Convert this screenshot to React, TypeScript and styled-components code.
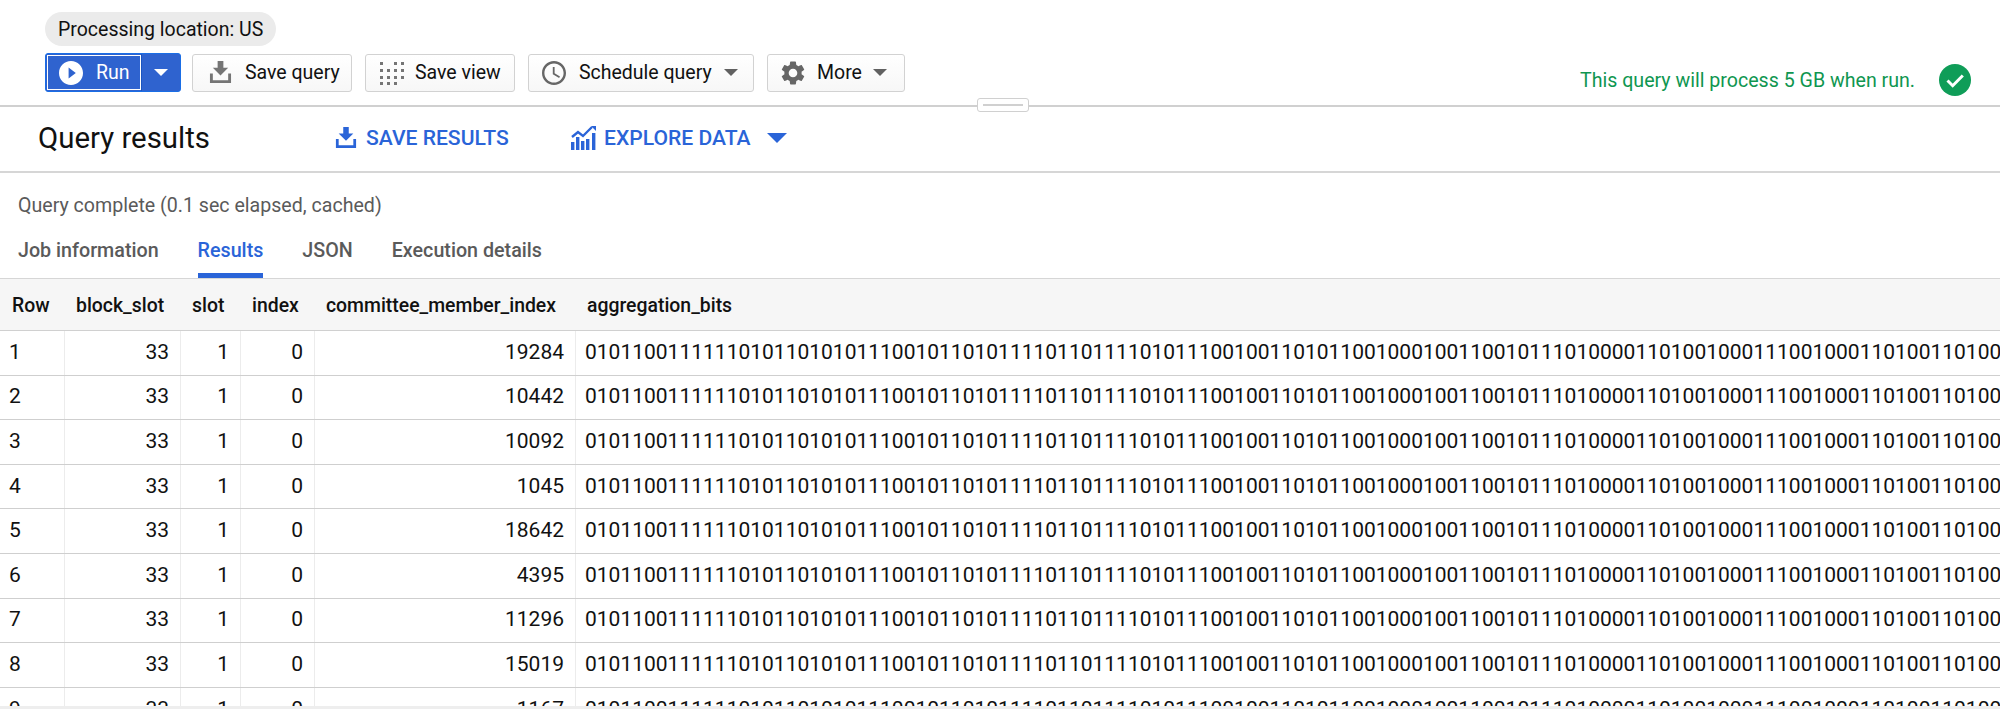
import React from "react";
import styled, { createGlobalStyle } from "styled-components";

const Global = createGlobalStyle`
  html, body { margin: 0; padding: 0; background: #fff; overflow: hidden; }
  body { font-family: Roboto, "Liberation Sans", sans-serif; color: #111; }
`;

const Page = styled.div`
  width: 2000px;
  height: 709px;
  overflow: hidden;
  display: flex;
  flex-direction: column;
  position: relative;
`;

const TopSection = styled.header`
  padding: 12px 0 0 45px;
  box-sizing: border-box;
  border-bottom: 2px solid #d0d0d0;
  height: 107px;
  position: relative;
`;

const Chip = styled.div`
  display: inline-flex;
  align-items: center;
  height: 34px;
  padding: 0 13px;
  border-radius: 17px;
  background: #ebebeb;
  font-size: 19.5px;
`;

const Toolbar = styled.div`
  display: flex;
  align-items: center;
  height: 39px;
  margin-top: 7px;
`;

const RunGroup = styled.div`
  display: flex;
  width: 136px;
  height: 39px;
  box-sizing: border-box;
  border: 1px solid #1a6ee6;
  border-radius: 3px;
  background: #2f63cf;
  margin-right: 11px;
`;

const RunMain = styled.div`
  width: 94px;
  margin: 1px 0 1px 1px;
  box-sizing: border-box;
  border: 1.5px solid #fff;
  display: flex;
  align-items: center;
  gap: 13px;
  padding-left: 11px;
  color: #fff;
  font-size: 19.5px;
`;

const RunCaret = styled.div`
  flex: 1;
  display: flex;
  align-items: center;
  justify-content: center;
  border-left: 1px solid #1a55c0;
`;

const Button = styled.div<{ $w: number; $gap: number; $pad: number }>`
  width: ${(p) => p.$w}px;
  height: 38px;
  box-sizing: border-box;
  border: 1.5px solid #d2d2d2;
  border-radius: 3px;
  background: linear-gradient(#fff, #f7f7f7);
  margin-right: 13px;
  display: flex;
  align-items: center;
  gap: ${(p) => p.$gap}px;
  padding-left: ${(p) => p.$pad}px;
  font-size: 19.5px;
  color: #111;
`;

const Caret = styled.span<{ $c: string; $s: number; $ml?: number }>`
  display: inline-block;
  width: 0;
  height: 0;
  margin-left: ${(p) => p.$ml ?? 0}px;
  border-left: ${(p) => p.$s}px solid transparent;
  border-right: ${(p) => p.$s}px solid transparent;
  border-top: ${(p) => p.$s}px solid ${(p) => p.$c};
`;

const Status = styled.div`
  position: absolute;
  right: 29px;
  top: 64px;
  display: flex;
  align-items: center;
  gap: 24px;
  color: #0f9650;
  font-size: 19.6px;
`;

const Handle = styled.div`
  position: absolute;
  left: 977px;
  bottom: -7px;
  width: 52px;
  height: 14px;
  box-sizing: border-box;
  background: #fff;
  border: 1.5px solid #d0d0d0;
  border-radius: 3px;
  display: flex;
  align-items: center;
  justify-content: center;
  &::after {
    content: "";
    width: 40px;
    height: 1.5px;
    background: #d0d0d0;
  }
`;

const ResultsBar = styled.div`
  height: 66px;
  box-sizing: border-box;
  padding-bottom: 3px;
  border-bottom: 2px solid #d6d6d6;
  display: flex;
  align-items: center;
  padding-left: 38px;
`;

const Title = styled.h1`
  margin: 0;
  font-weight: 400;
  font-size: 29.4px;
  color: #111;
  width: 297px;
`;

const Action = styled.div<{ $w: number; $gap: number }>`
  width: ${(p) => p.$w}px;
  display: flex;
  align-items: center;
  gap: ${(p) => p.$gap}px;
  color: #2a64d8;
  font-size: 21.1px;
  font-weight: 500;
`;

const CompleteLine = styled.div`
  margin-top: 21px;
  padding-left: 18px;
  font-size: 19.6px;
  line-height: 24px;
  color: #5a5a5a;
`;

const Tabs = styled.nav`
  display: flex;
  margin-top: 13px;
  padding-left: 18px;
  gap: 39px;
  height: 47px;
  box-sizing: border-box;
`;

const Tab = styled.div<{ $active?: boolean }>`
  font-size: 19.7px;
  font-weight: 500;
  line-height: 24px;
  padding-top: 8px;
  box-sizing: border-box;
  color: ${(p) => (p.$active ? "#2a64d8" : "#5a5a5a")};
  border-bottom: ${(p) => (p.$active ? "5px solid #2a64d8" : "none")};
`;

const COLS = "64px 116px 60px 74px 261px 1fr";

const HeaderRow = styled.div`
  display: grid;
  grid-template-columns: ${COLS};
  height: 53px;
  box-sizing: border-box;
  background: #f6f6f6;
  border-top: 1.5px solid #d6d6d6;
  border-bottom: 1.5px solid #d0d0d0;
`;

const HeaderCell = styled.div`
  padding: 2px 0 0 12px;
  display: flex;
  align-items: center;
  font-size: 19.4px;
  font-weight: 500;
  color: #111;
  white-space: nowrap;
  overflow: hidden;
`;

const Row = styled.div`
  display: grid;
  grid-template-columns: ${COLS};
  height: 44.6px;
  flex: none;
  box-sizing: border-box;
  border-bottom: 1.5px solid #cfcfcf;
`;

const Cell = styled.div<{ $num?: boolean }>`
  display: flex;
  align-items: center;
  justify-content: ${(p) => (p.$num ? "flex-end" : "flex-start")};
  padding: 0 ${(p) => (p.$num ? 11 : 0)}px 2px ${(p) => (p.$num ? 0 : 9)}px;
  font-size: 21px;
  color: #111;
  white-space: nowrap;
  overflow: hidden;
  & + & {
    border-left: 1.5px solid #ececec;
  }
`;

const Rows = styled.div`
  flex: 1;
  min-height: 0;
  overflow: hidden;
`;

const ScrollEdge = styled.div`
  position: absolute;
  left: 0;
  right: 0;
  bottom: 0;
  height: 3px;
  background: #eeeeee;
`;

const BITS =
  "010110011111101011010101110010110101111011011110101110010011010110010001001100101110100001101001000111001000110100110100";

const data = [19284, 10442, 10092, 1045, 18642, 4395, 11296, 15019, 1167];

const PlayIcon = () => (
  <svg width="24" height="24" viewBox="2 2 20 20" fill="#fff">
    <path d="M12 2C6.48 2 2 6.48 2 12s4.48 10 10 10 10-4.48 10-10S17.52 2 12 2zm-2 14.5v-9l6 4.5-6 4.5z" />
  </svg>
);

const SaveIcon = ({ c, s }: { c: string; s: number }) => (
  <svg width={s} height={s} viewBox="0 0 24 24" fill={c}>
    <path d="M9 0h6v7h5l-8 8-8-8h5z" />
    <path d="M1 13h3v7h16v-7h3v10H1z" />
  </svg>
);

const GridIcon = () => (
  <svg width="24" height="24" viewBox="0 0 24 24" fill="#757575">
    <rect x="0" y="1" width="3" height="3" />
    <rect x="21" y="1" width="3" height="3" />
    <rect x="14" y="1" width="3" height="3" />
    {[8, 15, 21].flatMap((y) =>
      [0, 7, 14, 21].map((x) =>
        y === 21 && x === 21 ? null : <rect key={`${x}-${y}`} x={x} y={y} width="3" height="3" />
      )
    )}
  </svg>
);

const ClockIcon = () => (
  <svg width="24" height="24" viewBox="2 2 20 20" fill="#666">
    <path d="M11.99 2C6.47 2 2 6.48 2 12s4.47 10 9.99 10C17.52 22 22 17.52 22 12S17.52 2 11.99 2zM12 20c-4.42 0-8-3.58-8-8s3.58-8 8-8 8 3.58 8 8-3.58 8-8 8zm.5-13H11v6l5.25 3.15.75-1.23-4.5-2.67z" />
  </svg>
);

const GearIcon = () => (
  <svg width="24" height="24" viewBox="2 2 20 20" fill="#666">
    <path d="M19.14 12.94c.04-.3.06-.61.06-.94 0-.32-.02-.64-.07-.94l2.03-1.58c.18-.14.23-.41.12-.61l-1.92-3.32c-.12-.22-.37-.29-.59-.22l-2.39.96c-.5-.38-1.03-.7-1.62-.94l-.36-2.54c-.04-.24-.24-.41-.48-.41h-3.84c-.24 0-.43.17-.47.41l-.36 2.54c-.59.24-1.13.57-1.62.94l-2.39-.96c-.22-.08-.47 0-.59.22L2.74 8.87c-.12.21-.08.47.12.61l2.03 1.58c-.05.3-.09.63-.09.94s.02.64.07.94l-2.03 1.58c-.18.14-.23.41-.12.61l1.92 3.32c.12.22.37.29.59.22l2.39-.96c.5.38 1.03.7 1.62.94l.36 2.54c.05.24.24.41.48.41h3.84c.24 0 .44-.17.47-.41l.36-2.54c.59-.24 1.13-.56 1.62-.94l2.39.96c.22.08.47 0 .59-.22l1.92-3.32c.12-.22.07-.47-.12-.61l-2.01-1.58zM12 15.6c-1.98 0-3.6-1.62-3.6-3.6s1.62-3.6 3.6-3.6 3.6 1.62 3.6 3.6-1.62 3.6-3.6 3.6z" />
  </svg>
);

const ChartIcon = () => (
  <svg width="25" height="24" viewBox="0 0 25 24" fill="none">
    <path d="M1 11l6-5 5 4 9-9" stroke="#2a64d8" strokeWidth="2.4" />
    <path d="M20 0h5v5z" fill="#2a64d8" />
    <g fill="#2a64d8">
      <rect x="0" y="16" width="3.4" height="8" />
      <rect x="5" y="11" width="3.4" height="13" />
      <rect x="10" y="15" width="3.4" height="9" />
      <rect x="15" y="13" width="3.4" height="11" />
      <rect x="21" y="7" width="3.4" height="17" />
    </g>
  </svg>
);

const CheckBadge = () => (
  <svg width="32" height="32" viewBox="0 0 32 32">
    <circle cx="16" cy="16" r="16" fill="#0f9d58" />
    <path d="M8.5 16.5l5.2 5.2L23.8 11.5" fill="none" stroke="#fff" strokeWidth="3" />
  </svg>
);

export default function App() {
  return (
    <Page>
      <Global />
      <TopSection>
        <Chip>Processing location: US</Chip>
        <Toolbar>
          <RunGroup>
            <RunMain>
              <PlayIcon />
              Run
            </RunMain>
            <RunCaret>
              <Caret $c="#fff" $s={7} />
            </RunCaret>
          </RunGroup>
          <Button $w={160} $gap={13} $pad={16}>
            <SaveIcon c="#757575" s={23} />
            Save query
          </Button>
          <Button $w={150} $gap={11} $pad={14}>
            <GridIcon />
            Save view
          </Button>
          <Button $w={226} $gap={13} $pad={13}>
            <ClockIcon />
            Schedule query
            <Caret $c="#616161" $s={7} $ml={-1} />
          </Button>
          <Button $w={138} $gap={12} $pad={13}>
            <GearIcon />
            More
            <Caret $c="#616161" $s={7} $ml={-1} />
          </Button>
        </Toolbar>
        <Status>
          This query will process 5 GB when run.
          <CheckBadge />
        </Status>
        <Handle />
      </TopSection>
      <ResultsBar>
        <Title>Query results</Title>
        <Action $w={236} $gap={9}>
          <SaveIcon c="#2a64d8" s={22} />
          SAVE RESULTS
        </Action>
        <Action $w={300} $gap={8}>
          <ChartIcon />
          EXPLORE DATA
          <Caret $c="#2a64d8" $s={10} $ml={8} />
        </Action>
      </ResultsBar>
      <CompleteLine>Query complete (0.1 sec elapsed, cached)</CompleteLine>
      <Tabs>
        <Tab>Job information</Tab>
        <Tab $active>Results</Tab>
        <Tab>JSON</Tab>
        <Tab>Execution details</Tab>
      </Tabs>
      <HeaderRow>
        {["Row", "block_slot", "slot", "index", "committee_member_index", "aggregation_bits"].map((h) => (
          <HeaderCell key={h}>{h}</HeaderCell>
        ))}
      </HeaderRow>
      <Rows>
        {data.map((v, i) => (
          <Row key={v}>
            <Cell>{i + 1}</Cell>
            <Cell $num>33</Cell>
            <Cell $num>1</Cell>
            <Cell $num>0</Cell>
            <Cell $num>{v}</Cell>
            <Cell>{BITS}</Cell>
          </Row>
        ))}
      </Rows>
      <ScrollEdge />
    </Page>
  );
}
